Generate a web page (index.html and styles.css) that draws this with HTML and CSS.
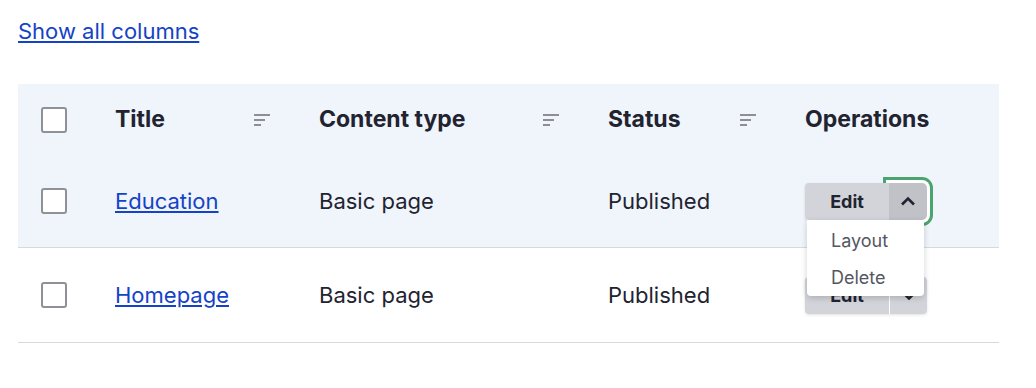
FILE: index.html
```html
<!DOCTYPE html>
<html lang="en">
<head>
    <meta charset="UTF-8">
    <title>Content</title>
    <link rel="stylesheet" href="styles.css">
</head>
<body>

<a class="show-all" href="#">Show all columns</a>

<table class="views-table">
    <colgroup>
        <col class="w-select">
        <col class="w-title">
        <col class="w-type">
        <col class="w-status">
        <col class="w-ops">
    </colgroup>
    <thead>
        <tr>
            <th class="col-select"><input type="checkbox" class="form-checkbox"></th>
            <th>
                <div class="th-inner">
                    <span>Title</span>
                    <svg class="sort-icon" width="16" height="12" viewBox="0 0 16 12"><rect x="0" y="0" width="16" height="2"/><rect x="0" y="5" width="11" height="2"/><rect x="0" y="10" width="7" height="2"/></svg>
                </div>
            </th>
            <th>
                <div class="th-inner">
                    <span>Content type</span>
                    <svg class="sort-icon" width="16" height="12" viewBox="0 0 16 12"><rect x="0" y="0" width="16" height="2"/><rect x="0" y="5" width="11" height="2"/><rect x="0" y="10" width="7" height="2"/></svg>
                </div>
            </th>
            <th>
                <div class="th-inner">
                    <span>Status</span>
                    <svg class="sort-icon" width="16" height="12" viewBox="0 0 16 12"><rect x="0" y="0" width="16" height="2"/><rect x="0" y="5" width="11" height="2"/><rect x="0" y="10" width="7" height="2"/></svg>
                </div>
            </th>
            <th>Operations</th>
        </tr>
    </thead>
    <tbody>
        <tr class="is-selected">
            <td class="col-select"><input type="checkbox" class="form-checkbox"></td>
            <td><a href="#">Education</a></td>
            <td>Basic page</td>
            <td>Published</td>
            <td>
                <div class="dropbutton is-open">
                    <a class="dropbutton-action" href="#">Edit</a>
                    <button class="dropbutton-toggle is-focused" type="button">
                        <svg width="16" height="10" viewBox="0 0 16 10"><polyline points="2,8.5 8,2.5 14,8.5" fill="none" stroke="#222330" stroke-width="2.6"/></svg>
                    </button>
                    <ul class="dropbutton-menu">
                        <li><a href="#">Layout</a></li>
                        <li><a href="#">Delete</a></li>
                    </ul>
                </div>
            </td>
        </tr>
        <tr class="row-last">
            <td class="col-select"><input type="checkbox" class="form-checkbox"></td>
            <td><a href="#">Homepage</a></td>
            <td>Basic page</td>
            <td>Published</td>
            <td>
                <div class="dropbutton">
                    <a class="dropbutton-action" href="#">Edit</a>
                    <button class="dropbutton-toggle" type="button">
                        <svg width="16" height="10" viewBox="0 0 16 10"><polyline points="2,2.5 8,8.5 14,2.5" fill="none" stroke="#222330" stroke-width="2.6"/></svg>
                    </button>
                </div>
            </td>
        </tr>
    </tbody>
</table>

</body>
</html>
```

FILE: styles.css
```css
body {
    margin: 0;
    padding: 0 18px;
    font-family: Inter, "Noto Sans", sans-serif;
    font-size: 22px;
    line-height: 1.5;
    color: #222330;
    background-color: #fff;
}
a {
    color: #1443c8;
}
.show-all {
    display: inline-block;
    margin-top: 15px;
}
.views-table {
    margin-top: 36px;
    width: 981px;
    border-collapse: collapse;
    table-layout: fixed;
}
.w-select {
    width: 74px;
}
.w-title {
    width: 204px;
}
.w-type {
    width: 289px;
}
.w-status {
    width: 197px;
}
.w-ops {
    width: 217px;
}
.views-table thead tr {
    background-color: #f0f4fb;
}
.views-table th {
    height: 71px;
    padding: 0 26px 0 23px;
    text-align: left;
    font-size: 23px;
    font-weight: 700;
    vertical-align: middle;
}
.th-inner {
    display: flex;
    align-items: center;
    justify-content: space-between;
}
.sort-icon {
    fill: #8e8f96;
}
.views-table tbody tr {
    border-bottom: 1px solid #d8d9de;
}
.views-table tbody tr.is-selected {
    background-color: #f0f4fb;
}
.views-table td {
    height: 92px;
    padding: 0 26px 0 23px;
    vertical-align: middle;
}
.views-table .row-last td {
    height: 94px;
}
.views-table .col-select {
    padding: 0 0 0 23px;
}
.form-checkbox {
    appearance: none;
    display: block;
    width: 26px;
    height: 26px;
    margin: 0;
    border: 2px solid #8f9199;
    border-radius: 3px;
    background-color: #fff;
}
.dropbutton {
    position: relative;
    display: flex;
    width: 122px;
    border-radius: 4px;
    box-shadow: 0 1px 3px rgba(0, 0, 0, 0.12);
}
.dropbutton-action {
    position: relative;
    z-index: 1;
    width: 84px;
    height: 37px;
    line-height: 37px;
    text-align: center;
    font-size: 18px;
    font-weight: 700;
    color: #222330;
    text-decoration: none;
    background-color: #d3d4d9;
    border-radius: 4px 0 0 4px;
}
.dropbutton-toggle {
    display: flex;
    align-items: center;
    justify-content: center;
    width: 38px;
    height: 37px;
    padding: 0;
    border: none;
    border-left: 1px solid #fff;
    border-radius: 0 4px 4px 0;
    background-color: #d3d4d9;
}
.dropbutton-toggle.is-focused {
    background-color: #c1c2c7;
    border-left: none;
    box-shadow: 0 0 0 3px #fff, 0 0 0 6px #4ba36e;
    border-radius: 0 5px 5px 0;
}
.dropbutton-menu {
    position: absolute;
    z-index: 2;
    top: 37px;
    left: 2px;
    width: 117px;
    margin: 0;
    padding: 2px 0 0;
    list-style: none;
    background-color: #fff;
    border-radius: 0 0 4px 4px;
    box-shadow: 0 2px 6px rgba(0, 0, 0, 0.18);
}
.dropbutton-menu a {
    display: block;
    height: 37px;
    line-height: 37px;
    padding-left: 24px;
    font-size: 18px;
    color: #55565f;
    text-decoration: none;
}
```
